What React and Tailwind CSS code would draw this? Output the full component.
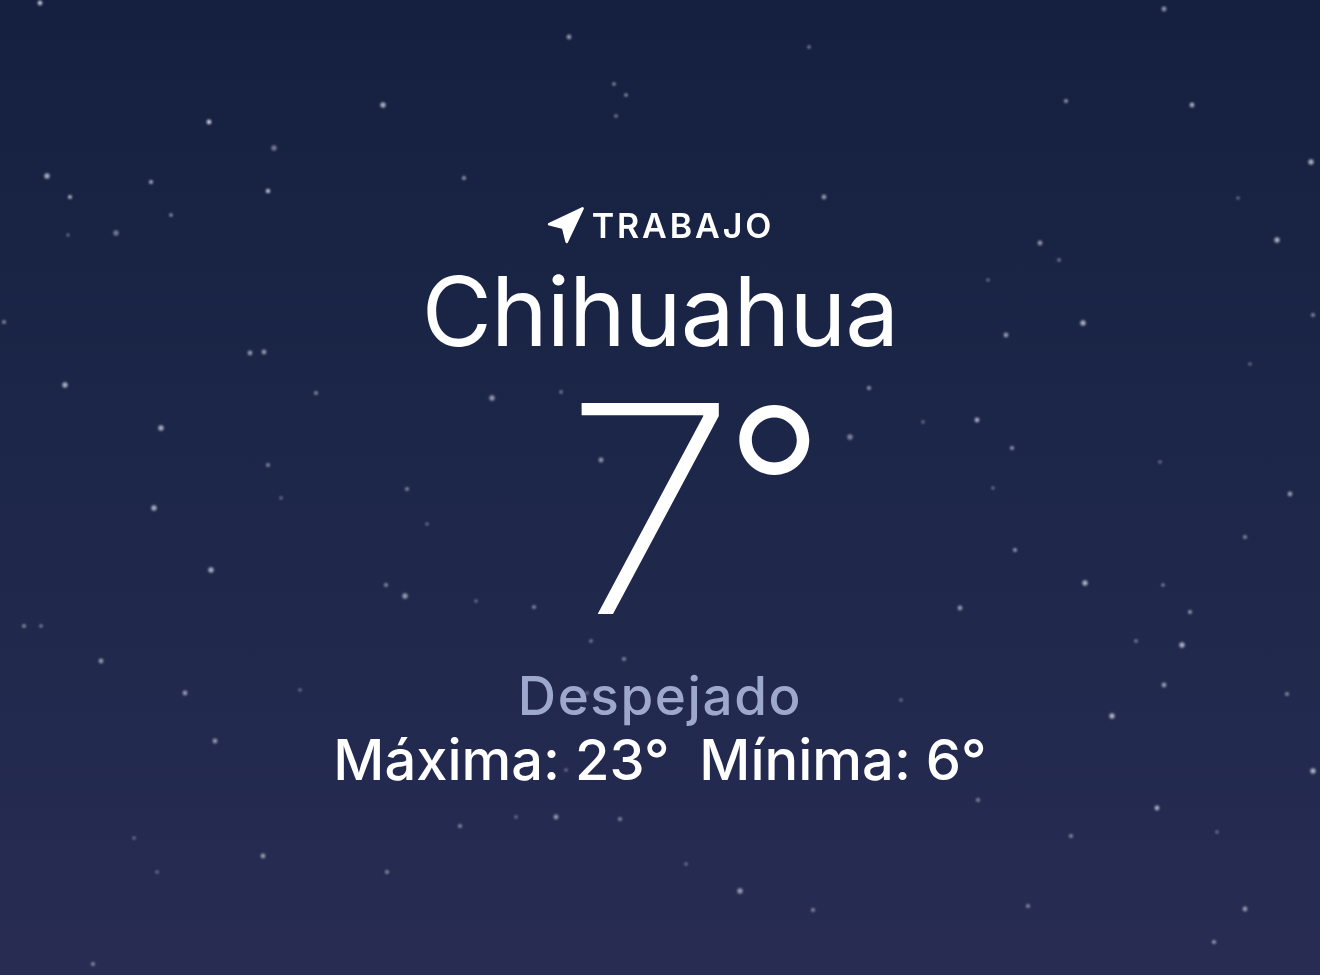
import React from 'react';

const stars = [
  [40, 3, 1.6, 0.8], [209, 122, 1.6, 0.85], [274, 148, 1.8, 0.45], [47, 176, 1.8, 0.7], [70, 197, 1.4, 0.75],
  [151, 182, 1.4, 0.7], [268, 191, 1.5, 0.8], [171, 215, 1.2, 0.6], [116, 233, 1.8, 0.45], [68, 235, 1, 0.5],
  [569, 37, 1.6, 0.6], [614, 84, 1.2, 0.6], [626, 95, 1.2, 0.6], [383, 105, 1.8, 0.7], [464, 178, 1.4, 0.6],
  [616, 116, 1.2, 0.5], [809, 47, 1.2, 0.5], [1066, 101, 1.4, 0.6], [1192, 105, 1.6, 0.7], [1311, 162, 1.8, 0.7],
  [1040, 243, 1.6, 0.6], [1277, 240, 1.8, 0.7], [1059, 260, 1.2, 0.5], [1083, 323, 1.8, 0.7], [1164, 9, 1.6, 0.6],
  [988, 280, 1.2, 0.4], [1006, 335, 1.6, 0.6], [1313, 315, 1.4, 0.5], [1238, 198, 1.2, 0.4], [824, 197, 1.6, 0.6],
  [869, 388, 1.4, 0.6], [850, 437, 1.8, 0.5], [923, 422, 1.2, 0.4], [977, 420, 1.6, 0.7], [1012, 448, 1.4, 0.6],
  [1015, 550, 1.4, 0.6], [1085, 583, 1.8, 0.7], [1163, 585, 1.2, 0.5], [1190, 612, 1.4, 0.6], [1182, 645, 1.8, 0.7],
  [1136, 641, 1.2, 0.5], [1245, 537, 1.4, 0.5], [1290, 494, 1.6, 0.6], [1164, 685, 1.6, 0.6], [1112, 716, 1.8, 0.7],
  [1157, 808, 1.6, 0.7], [1313, 771, 1.8, 0.7], [1071, 836, 1.4, 0.5], [1245, 909, 1.6, 0.6], [1214, 942, 1.4, 0.6],
  [1028, 906, 1.4, 0.5], [978, 800, 1.4, 0.5], [901, 700, 1.2, 0.4], [960, 608, 1.6, 0.6], [993, 488, 1.2, 0.4],
  [65, 385, 1.8, 0.7], [161, 428, 1.8, 0.7], [154, 508, 1.8, 0.7], [211, 570, 1.8, 0.7], [24, 626, 1.4, 0.5],
  [41, 626, 1.2, 0.5], [101, 661, 1.6, 0.6], [215, 741, 1.6, 0.6], [263, 856, 1.6, 0.6], [387, 872, 1.4, 0.5],
  [405, 596, 1.8, 0.6], [476, 601, 1.2, 0.4], [534, 607, 1.4, 0.5], [591, 641, 1.2, 0.5], [624, 659, 1.4, 0.5],
  [587, 693, 1.2, 0.4], [492, 398, 1.8, 0.6], [601, 460, 1.6, 0.6], [561, 392, 1.2, 0.5], [316, 393, 1.4, 0.5],
  [250, 353, 1.6, 0.6], [264, 352, 1.6, 0.6], [268, 465, 1.4, 0.5], [281, 498, 1.2, 0.4], [386, 585, 1.4, 0.5],
  [407, 489, 1.4, 0.5], [427, 524, 1.2, 0.4], [516, 817, 1.2, 0.4], [556, 817, 1.6, 0.6], [620, 819, 1.4, 0.5],
  [740, 891, 1.8, 0.6], [813, 910, 1.4, 0.5], [686, 864, 1.2, 0.4], [566, 770, 1.2, 0.4], [460, 826, 1.4, 0.5],
  [300, 690, 1.2, 0.4], [185, 693, 1.6, 0.6], [157, 872, 1.2, 0.4], [134, 838, 1.2, 0.4], [93, 964, 1.4, 0.5],
  [4, 322, 1.4, 0.5], [1250, 364, 1.2, 0.4], [1160, 462, 1.2, 0.4], [1287, 694, 1.4, 0.5], [1217, 832, 1.2, 0.4],
];

const StarField = () => (
  <svg className="absolute inset-0 h-full w-full" viewBox="0 0 1320 975" preserveAspectRatio="none">
    <defs>
      <filter id="glow" x="-2" y="-2" width="5" height="5">
        <feGaussianBlur stdDeviation="0.9" />
      </filter>
    </defs>
    <g filter="url(#glow)">
      {stars.map(([x, y, r, o], i) => (
        <circle key={i} cx={x} cy={y} r={r * 1.5} fill="#dfe4f2" opacity={o} />
      ))}
    </g>
  </svg>
);

const NavArrow = () => (
  <svg width="42" height="42" viewBox="0 0 24 24" className="text-white">
    <polygon points="3 11 22 2 13 21 11 13 3 11" fill="currentColor" stroke="currentColor" strokeWidth="1.6" strokeLinejoin="round" />
  </svg>
);

export default function App() {
  return (
    <div className="relative h-[975px] w-[1320px] overflow-hidden bg-gradient-to-b from-[#152040] via-[#1d2749] to-[#282c53] font-['Inter','Noto_Sans',sans-serif] text-white">
      <StarField />
      <div className="relative flex flex-col items-center pt-[205px]">
        <div className="flex items-center gap-[6px] pr-[2px]">
          <NavArrow />
          <span className="text-[34px] font-semibold leading-none tracking-[0.085em]">TRABAJO</span>
        </div>
        <h1 className="mt-[16px] text-[96px] font-normal leading-none tracking-[-0.01em]">Chihuahua</h1>
        <div className="ml-[74px] flex items-start">
          <span className="mt-[5px] scale-x-[1.08] text-[290px] font-extralight leading-none">7</span>
          <span className="-ml-[6px] mt-[18px] text-[220px] font-light leading-none">°</span>
        </div>
        <p className="mt-[16px] text-[53px] font-medium leading-none tracking-[0.03em] text-[#9ea8cc]">Despejado</p>
        <p className="mt-[9px] text-[56px] font-medium leading-none">
          Máxima: 23°&nbsp; Mínima: 6°
        </p>
      </div>
    </div>
  );
}
